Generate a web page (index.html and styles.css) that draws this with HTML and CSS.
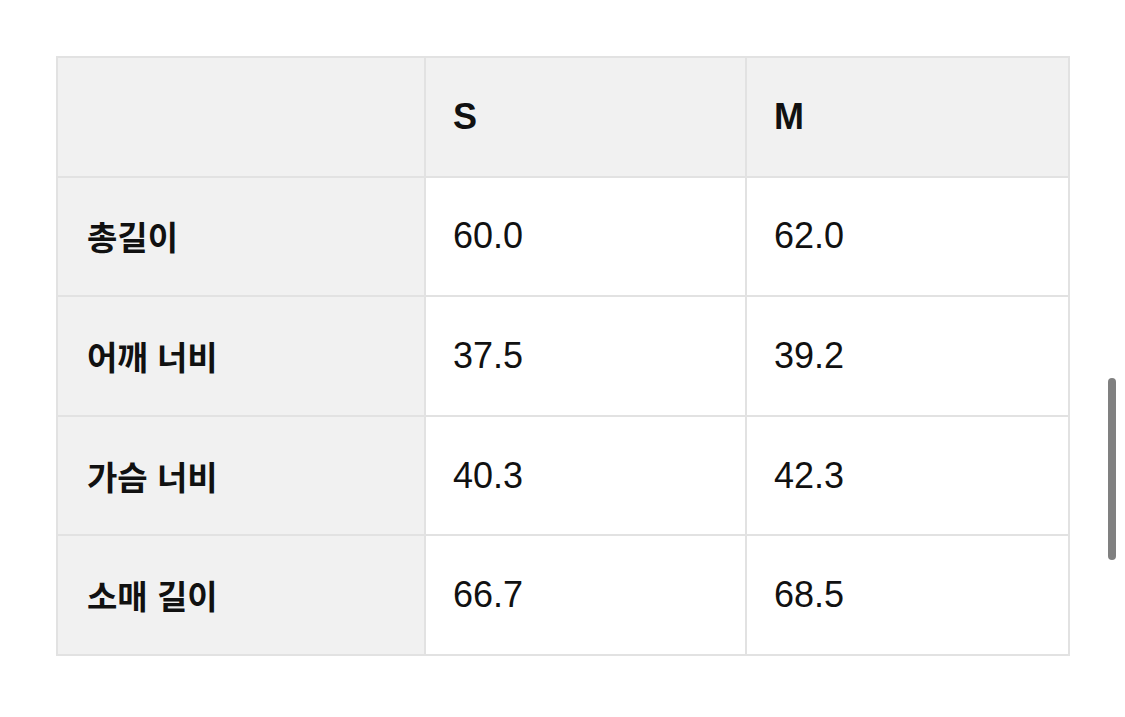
FILE: index.html
```html
<!DOCTYPE html>
<html lang="ko">
<head>
<meta charset="utf-8">
<link rel="stylesheet" href="styles.css">
</head>
<body>
<div class="page">
  <table class="size-table">
    <colgroup>
      <col class="c1"><col class="c2"><col class="c3">
    </colgroup>
    <thead>
      <tr><th class="corner"></th><th>S</th><th>M</th></tr>
    </thead>
    <tbody>
      <tr><th>총길이</th><td>60.0</td><td>62.0</td></tr>
      <tr><th>어깨 너비</th><td>37.5</td><td>39.2</td></tr>
      <tr><th>가슴 너비</th><td>40.3</td><td>42.3</td></tr>
      <tr><th>소매 길이</th><td>66.7</td><td>68.5</td></tr>
    </tbody>
  </table>
</div>
<div class="scrollbar"></div>
</body>
</html>
```
FILE: styles.css
```css
html, body {
  margin: 0;
  padding: 0;
  background: #ffffff;
  width: 1125px;
  height: 717px;
  overflow: hidden;
}
body {
  font-family: "Liberation Sans", "Noto Sans CJK KR", sans-serif;
  color: #111111;
}
.page {
  padding: 56px 0 0 56px;
}
.size-table {
  border-collapse: collapse;
  table-layout: fixed;
  width: 1012px;
}
.c1 { width: 368px; }
.c2 { width: 321px; }
.c3 { width: 323px; }
.size-table th,
.size-table td {
  border: 2px solid #e2e2e2;
  height: 119.6px;
  padding: 0 0 0 27px;
  text-align: left;
  vertical-align: middle;
  font-size: 36px;
  box-sizing: border-box;
}
.size-table td {
  font-weight: 400;
  background: #ffffff;
}
.size-table th {
  font-weight: 700;
  background: #f1f1f1;
}
.size-table tbody th {
  font-size: 33px;
  padding-left: 29px;
}
.scrollbar {
  position: absolute;
  left: 1108px;
  top: 378px;
  width: 8px;
  height: 182px;
  border-radius: 4px;
  background: #808080;
}
```
